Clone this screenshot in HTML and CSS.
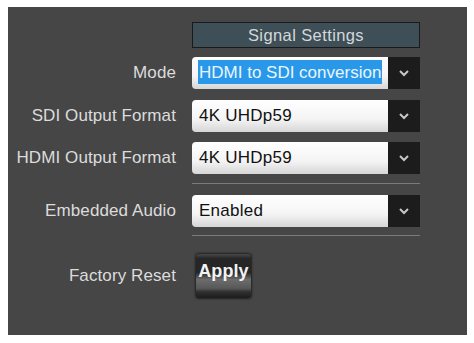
FILE: index.html
```html
<!DOCTYPE html>
<html>
<head>
<meta charset="utf-8">
<link rel="stylesheet" href="styles.css">
</head>
<body>
<div class="panel">
  <div class="row head-row">
    <div class="label"></div>
    <div class="header">Signal Settings</div>
  </div>
  <div class="row r-mode">
    <div class="label">Mode</div>
    <div class="select"><div class="field field-mode"><span class="sel">HDMI to SDI conversion</span></div><div class="arrow"><svg width="12" height="8" viewBox="0 0 12 8"><path d="M2 2 L6 6 L10 2" fill="none" stroke="#c8c8c8" stroke-width="2"/></svg></div></div>
  </div>
  <div class="row r-sdi">
    <div class="label">SDI Output Format</div>
    <div class="select"><div class="field">4K UHDp59</div><div class="arrow"><svg width="12" height="8" viewBox="0 0 12 8"><path d="M2 2 L6 6 L10 2" fill="none" stroke="#c8c8c8" stroke-width="2"/></svg></div></div>
  </div>
  <div class="row r-hdmi">
    <div class="label">HDMI Output Format</div>
    <div class="select"><div class="field">4K UHDp59</div><div class="arrow"><svg width="12" height="8" viewBox="0 0 12 8"><path d="M2 2 L6 6 L10 2" fill="none" stroke="#c8c8c8" stroke-width="2"/></svg></div></div>
  </div>
  <div class="row sep-row"><div class="label"></div><div class="sep"></div></div>
  <div class="row r-audio">
    <div class="label">Embedded Audio</div>
    <div class="select"><div class="field">Enabled</div><div class="arrow"><svg width="12" height="8" viewBox="0 0 12 8"><path d="M2 2 L6 6 L10 2" fill="none" stroke="#c8c8c8" stroke-width="2"/></svg></div></div>
  </div>
  <div class="row sep-row2"><div class="label"></div><div class="sep"></div></div>
  <div class="row r-reset">
    <div class="label">Factory Reset</div>
    <div class="btn-wrap"><div class="btn"><span class="btn-text">Apply</span></div></div>
  </div>
</div>
</body>
</html>
```
FILE: styles.css
```css
html, body { margin: 0; padding: 0; background: #ffffff; }
body { width: 474px; height: 343px; overflow: hidden; }
.panel {
  margin: 7px 7px 0 8px;
  width: 459px;
  height: 328px;
  background: #464646;
  box-sizing: border-box;
  padding-top: 15px;
  display: flex;
  flex-direction: column;
  font-family: "Liberation Sans", Arial, sans-serif;
}
.row {
  display: grid;
  grid-template-columns: 168px 228px;
  column-gap: 16px;
  align-items: center;
}
.label {
  text-align: right;
  color: #dcdcdc;
  font-size: 17px;
  letter-spacing: 0.1px;
}
.header {
  height: 26px;
  box-sizing: border-box;
  border: 1px solid #1a1a1a;
  background: #3e4f57;
  color: #d4d8da;
  font-size: 16.5px;
  letter-spacing: 0.4px;
  text-align: center;
  line-height: 24px;
}
.r-mode { margin-top: 9px; }
.r-sdi { margin-top: 11px; }
.r-hdmi { margin-top: 10px; }
.sep-row { margin-top: 9px; }
.r-audio { margin-top: 11px; }
.sep-row2 { margin-top: 8px; }
.r-reset { margin-top: 17px; }
.select {
  display: flex;
  height: 32px;
}
.field {
  flex: 1;
  border-radius: 4px 0 0 4px;
  background: linear-gradient(#ffffff 0%, #f4f4f4 60%, #d6d6d6 100%);
  color: #111;
  font-size: 17px;
  letter-spacing: 0.25px;
  padding-left: 7px;
  line-height: 32px;
  white-space: nowrap;
  overflow: hidden;
}
.field-mode {
  padding-left: 6px;
  letter-spacing: 0;
}
.sel {
  background: #2a98e8;
  color: #e9f6ff;
  padding: 3px 1px 2px 1px;
}
.arrow {
  width: 32px;
  background: #1c1c1c;
  display: flex;
  align-items: center;
  justify-content: center;
}
.sep {
  height: 1px;
  background: #7a7a7a;
}
.btn-wrap { display: flex; }
.btn {
  margin-left: 3px;
  width: 57px;
  height: 46px;
  box-sizing: border-box;
  border-radius: 4px;
  border: 1px solid #2a2a2a;
  background: linear-gradient(#4a4a4a 0%, #262626 10%, #262626 42%, #6c6c6c 58%, #585858 78%, #303030 86%, #1c1c1c 100%);
  box-shadow: 0 0 2px #222;
  display: flex;
  justify-content: center;
  padding-top: 7px;
}
.btn-text {
  color: #f2f2f2;
  font-weight: bold;
  font-size: 18px;
  letter-spacing: 0.1px;
}
```
